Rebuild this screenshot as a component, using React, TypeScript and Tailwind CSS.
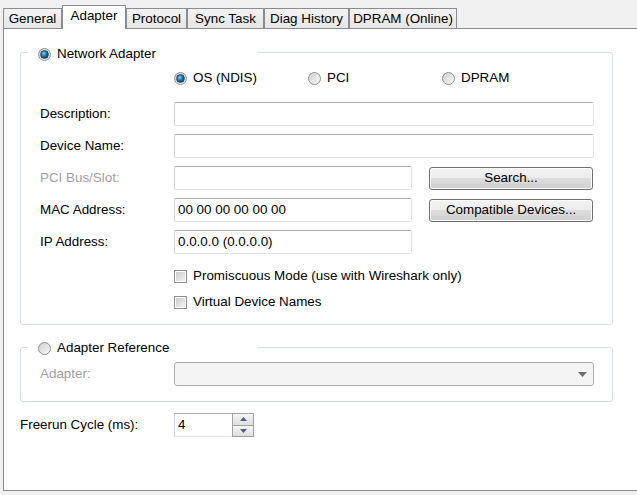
import React from 'react';

const tabs = [
  { label: 'General', w: 'w-[59px]' },
  { label: 'Adapter', w: 'w-[64px]', active: true },
  { label: 'Protocol', w: 'w-[61px]' },
  { label: 'Sync Task', w: 'w-[77px]' },
  { label: 'Diag History', w: 'w-[85px]' },
  { label: 'DPRAM (Online)', w: 'w-[108px]' },
];

function Radio({ checked }: { checked?: boolean }) {
  return (
    <span className="w-[13px] h-[13px] shrink-0 rounded-full border border-[#8e8f8f] bg-[linear-gradient(135deg,#d0d0d0,#f8f8f8)] flex items-center justify-center">
      {checked && (
        <span className="w-[9px] h-[9px] rounded-full border border-[#1b4e78] bg-[radial-gradient(circle_at_40%_35%,#7fd0fb,#16679f_50%,#082c4a)]" />
      )}
    </span>
  );
}

function Checkbox() {
  return (
    <span className="w-[13px] h-[13px] shrink-0 border border-[#8e8f8f] bg-white p-[1px]">
      <span className="block w-full h-full bg-[linear-gradient(135deg,#cbcbcb,#f4f4f4)]" />
    </span>
  );
}

function TextBox({ w, value }: { w: string; value?: string }) {
  return (
    <div className={`${w} h-[24px] shrink-0 border border-[#dfe3e9] border-t-[#abadb3] border-l-[#d0d3d9] rounded-[2px] bg-white pl-[3px] flex items-center`}>
      {value}
    </div>
  );
}

function Button({ children }: { children: React.ReactNode }) {
  return (
    <div className="ml-[17px] w-[164px] h-[23px] border border-[#707070] rounded-[3px] bg-[linear-gradient(#f2f2f2_0%,#ebebeb_50%,#dddddd_50%,#cfcfcf_100%)] shadow-[inset_0_0_0_1px_#fbfbfb] flex items-center justify-center">
      {children}
    </div>
  );
}

export default function App() {
  return (
    <div className="w-[637px] h-[495px] bg-[#f0f0f0] text-[13.4px] text-black overflow-hidden font-['Liberation_Sans',Arial,sans-serif] leading-[16px]">
      {/* Tabs */}
      <div className="flex items-end h-[28px] pl-[3px]">
        {tabs.map((t) =>
          t.active ? (
            <div
              key={t.label}
              className={`${t.w} h-[24px] -mb-px relative z-10 bg-white border border-b-0 border-[#898c95] flex items-start justify-center pt-[2px]`}
            >
              {t.label}
            </div>
          ) : (
            <div
              key={t.label}
              className={`${t.w} h-[20px] border border-b-0 border-[#898c95] bg-[linear-gradient(#f3f3f3,#e6e6e6)] flex items-center justify-center`}
            >
              {t.label}
            </div>
          )
        )}
      </div>

      {/* Tab page */}
      <div className="ml-[3px] h-[463px] border border-r-0 border-[#898c95] bg-white pl-[16px] pt-[15px]">
        {/* Network Adapter group */}
        <fieldset className="w-[593px] border border-[#d5dfe5] rounded-[3px] pl-[19px] pr-[17px] pb-[14px]">
          <legend className="-ml-[12px] w-[230px] h-[16px] pl-[10px]">
            <div className="mt-[2px] flex items-center gap-[6px] h-[16px]">
              <Radio checked />
              <span>Network Adapter</span>
            </div>
          </legend>

          <div className="mt-[6px] h-[24px] flex items-center pl-[134px]">
            <div className="w-[134px] flex items-center gap-[6px]">
              <Radio checked />
              <span>OS (NDIS)</span>
            </div>
            <div className="w-[134px] flex items-center gap-[6px]">
              <Radio />
              <span>PCI</span>
            </div>
            <div className="w-[134px] flex items-center gap-[6px]">
              <Radio />
              <span>DPRAM</span>
            </div>
          </div>

          <div className="mt-[12px] h-[24px] flex items-center">
            <span className="w-[134px] shrink-0">Description:</span>
            <TextBox w="w-[420px]" />
          </div>
          <div className="mt-[8px] h-[24px] flex items-center">
            <span className="w-[134px] shrink-0">Device Name:</span>
            <TextBox w="w-[420px]" />
          </div>
          <div className="mt-[8px] h-[24px] flex items-center">
            <span className="w-[134px] shrink-0 text-[#a0a0a0]">PCI Bus/Slot:</span>
            <TextBox w="w-[238px]" />
            <Button>Search...</Button>
          </div>
          <div className="mt-[8px] h-[24px] flex items-center">
            <span className="w-[134px] shrink-0">MAC Address:</span>
            <TextBox w="w-[238px]" value="00 00 00 00 00 00" />
            <Button>Compatible Devices...</Button>
          </div>
          <div className="mt-[8px] h-[24px] flex items-center">
            <span className="w-[134px] shrink-0">IP Address:</span>
            <TextBox w="w-[238px]" value="0.0.0.0 (0.0.0.0)" />
          </div>

          <div className="mt-[14px] h-[16px] flex items-center gap-[6px] pl-[134px]">
            <Checkbox />
            <span>Promiscuous Mode (use with Wireshark only)</span>
          </div>
          <div className="mt-[10px] h-[16px] flex items-center gap-[6px] pl-[134px]">
            <Checkbox />
            <span>Virtual Device Names</span>
          </div>
        </fieldset>

        {/* Adapter Reference group */}
        <fieldset className="mt-[14px] w-[593px] border border-[#d5dfe5] rounded-[3px] pl-[19px] pr-[17px] pb-[15px]">
          <legend className="-ml-[12px] w-[230px] h-[16px] pl-[10px]">
            <div className="mt-[1px] flex items-center gap-[6px] h-[16px]">
              <Radio />
              <span>Adapter Reference</span>
            </div>
          </legend>
          <div className="mt-[7px] h-[24px] flex items-center">
            <span className="w-[134px] shrink-0 text-[#a0a0a0]">Adapter:</span>
            <div className="w-[420px] h-[24px] border border-[#acacac] rounded-[3px] bg-[#f4f4f4] flex items-center justify-end pr-[6px]">
              <svg width="9" height="5" viewBox="0 0 9 5">
                <path d="M0 0h9L4.5 5z" fill="#6d6d6d" />
              </svg>
            </div>
          </div>
        </fieldset>

        {/* Freerun cycle */}
        <div className="mt-[11px] h-[24px] flex items-center">
          <span className="w-[154px] shrink-0">Freerun Cycle (ms):</span>
          <div className="w-[80px] h-[24px] border border-[#dfe3e9] border-t-[#abadb3] border-l-[#d0d3d9] bg-white flex">
            <span className="flex-1 pl-[3px] flex items-center">4</span>
            <div className="w-[22px] -my-px -mr-px border border-[#a3a3a3] flex flex-col">
              <div className="flex-1 border-b border-[#a3a3a3] bg-[linear-gradient(#f6f6f6,#dedede)] flex items-center justify-center">
                <svg width="7" height="4" viewBox="0 0 7 4">
                  <path d="M0 4h7L3.5 0z" fill="#4d6185" />
                </svg>
              </div>
              <div className="flex-1 bg-[linear-gradient(#f6f6f6,#dedede)] flex items-center justify-center">
                <svg width="7" height="4" viewBox="0 0 7 4">
                  <path d="M0 0h7L3.5 4z" fill="#4d6185" />
                </svg>
              </div>
            </div>
          </div>
        </div>
      </div>
    </div>
  );
}
